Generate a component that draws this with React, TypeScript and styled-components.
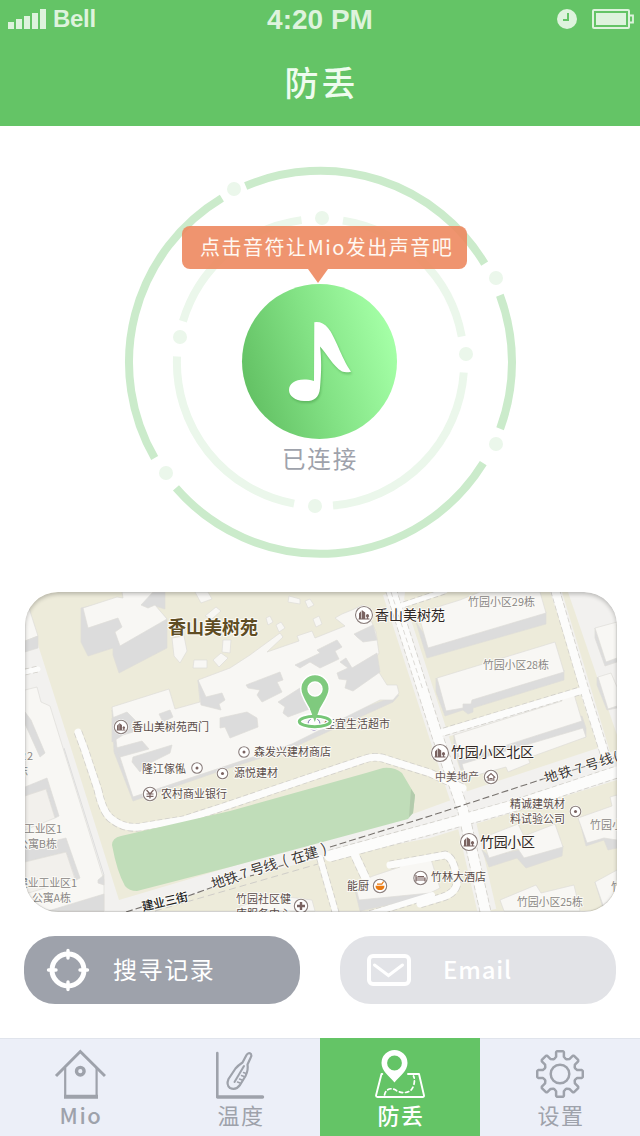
import React from "react";
import styled, { createGlobalStyle } from "styled-components";

const GREEN = "#64c466";
const SLATE = "#9ea2ab";
const cjk = `"Noto Sans CJK SC", "Noto Sans", sans-serif`;

const Global = createGlobalStyle`
  * { box-sizing: border-box; }
  body { margin: 0; background: #fff; font-family: ${cjk}; }
`;

const Screen = styled.div`
  width: 640px;
  height: 1136px;
  display: flex;
  flex-direction: column;
  background: #fff;
  overflow: hidden;
`;

const StatusBar = styled.div`
  height: 38px;
  display: grid;
  grid-template-columns: 1fr auto 1fr;
  align-items: center;
  padding: 0 6px 0 8px;
  color: #def3dd;
  font-family: "Liberation Sans", Arial, sans-serif;
  font-weight: bold;
`;
const Carrier = styled.div`
  display: flex;
  align-items: center;
  gap: 6px;
  font-size: 24px;
  letter-spacing: -0.3px;
`;
const Clock = styled.div`
  font-size: 28px;
  padding-top: 1px;
  margin-left: -2px;
`;
const StatusIcons = styled.div`
  display: flex;
  justify-content: flex-end;
  align-items: center;
  gap: 14px;
`;

const Header = styled.header`
  height: 126px;
  background: ${GREEN};
`;
const Title = styled.h1`
  margin: 0;
  height: 88px;
  padding: 0 0 0 3px;
  line-height: 88px;
  text-align: center;
  font-size: 34px;
  font-weight: 500;
  letter-spacing: 3px;
  color: #eefcee;
`;

const Radar = styled.section`
  position: relative;
  height: 466px;
`;
const RadarArt = styled.svg`
  display: block;
`;
const Bubble = styled.div`
  position: absolute;
  left: 182px;
  top: 100px;
  width: 285px;
  height: 43px;
  padding-left: 18px;
  border-radius: 8px;
  background: rgba(237, 136, 95, 0.9);
  color: #fff8f2;
  font-size: 20px;
  line-height: 41px;
  letter-spacing: 1.5px;
  white-space: nowrap;
  &::after {
    content: "";
    position: absolute;
    left: 126px;
    top: 43px;
    border: 10px solid transparent;
    border-top: 14px solid rgba(237, 136, 95, 0.9);
    border-bottom: 0;
  }
`;
const Connection = styled.div`
  position: absolute;
  left: 0;
  right: 0;
  top: 314px;
  line-height: 36px;
  text-align: center;
  font-size: 23.5px;
  letter-spacing: 1.8px;
  color: ${SLATE};
`;

const MapCard = styled.section`
  position: relative;
  width: 592px;
  height: 320px;
  margin-left: 25px;
  border-radius: 33px;
  overflow: hidden;
  &::after {
    content: "";
    position: absolute;
    inset: 0;
    border-radius: 33px;
    box-shadow: inset 0 2px 4px rgba(0, 0, 0, 0.24), inset 0 -1px 1px rgba(0, 0, 0, 0.12);
  }
`;
const MapArt = styled.svg`
  display: block;
  text {
    paint-order: stroke;
    stroke: #fbfaf6;
    stroke-width: 2px;
    stroke-linejoin: round;
    font-family: ${cjk};
  }
`;

const Actions = styled.div`
  display: flex;
  gap: 40px;
  padding: 24px 24px 34px;
`;
const Action = styled.button<{ $tone: string; $lead: number; $gap: number }>`
  width: 276px;
  height: 68px;
  border: 0;
  border-radius: 31px;
  background: ${(p) => p.$tone};
  display: flex;
  align-items: center;
  gap: ${(p) => p.$gap}px;
  padding: 0 0 0 ${(p) => p.$lead}px;
  color: #fff;
`;
const ActionLabel = styled.span<{ $size: number; $spacing: number; $weight: number }>`
  padding-bottom: 3px;
  font-family: ${cjk};
  font-size: ${(p) => p.$size}px;
  font-weight: ${(p) => p.$weight};
  letter-spacing: ${(p) => p.$spacing}px;
`;

const TabBar = styled.nav`
  display: grid;
  grid-template-columns: repeat(4, 160px);
  height: 98px;
`;
const Tab = styled.div<{ $active?: boolean }>`
  display: flex;
  flex-direction: column;
  align-items: center;
  background: ${(p) => (p.$active ? GREEN : "#eceff8")};
  border-top: 1px solid ${(p) => (p.$active ? GREEN : "#e0e4ec")};
  color: ${(p) => (p.$active ? "#fff" : SLATE)};
`;
const TabIcon = styled.svg`
  margin-top: 9px;
  flex: none;
`;
const TabLabel = styled.span<{ $strong?: boolean }>`
  font-size: 22px;
  line-height: 30px;
  margin-top: -1px;
  padding-left: 2px;
  letter-spacing: 1.6px;
  font-weight: ${(p) => (p.$strong ? 500 : 400)};
`;

const arc = (cx: number, cy: number, r: number, a: number, b: number) => {
  const p = (d: number) => {
    const t = (d * Math.PI) / 180;
    return `${(cx + r * Math.sin(t)).toFixed(2)} ${(cy - r * Math.cos(t)).toFixed(2)}`;
  };
  return `M${p(a)} A${r} ${r} 0 ${b - a > 180 ? 1 : 0} 1 ${p(b)}`;
};
const outerArcs = [[-23, 59], [69.5, 110.3], [121.8, 229], [240, 329]];
const innerArcs = [[9, 79.6], [94, 175], [190.6, 272.4], [286.7, 352.4]];
const dots = [[234, 189], [496, 278], [496, 444], [166, 473], [322, 218], [180, 337], [466, 354], [315, 506]];

const ROOF = "#f8f7f4";
const SIDE = "#dcdcdc";
const BEIGE = "#edebda";
const PAVE = "#f2f1ef";

const shapes: [string, string][] = [
  // parkland
  [BEIGE, "25,592 387,592 440,745 465,795 410,815 230,867 119,900 70,745 39,648"],
  [BEIGE, "405,592 550,592 583,688 437,732 402,615"],
  [BEIGE, "562,592 568,592 617,735 617,750 610,752"],
  [BEIGE, "444,738 581,695 598,748 465,792"],
  [BEIGE, "150,911 234,880 322,858 430,838 617,780 617,911"],
  // west side
  [ROOF, "25,608 29,608 38,636 25,641"],
  [SIDE, "25,641 38,636 38,648 25,652"],
  [ROOF, "25,690 37,687 41,702 50,706 104,880 104,911 25,911"],
  [SIDE, "25,712 31,720 45,753 40,757 25,724"],
  [SIDE, "25,787 47,778 59,816 55,818 46,789 25,796"],
  [SIDE, "25,848 66,838 80,878 76,880 66,852 25,862"],
  ["#f2f0ec", "25,796 46,789 55,818 25,830"],
  ["#f2f0ec", "25,862 66,852 75,879 25,894"],
  [SIDE, "98,880 104,875 104,885 98,883"],
  [SIDE, "48,911 104,894 104,911"],
  // tower in the north west
  [SIDE, "81,608 81,642 88,656 113,648 113,655 119,673 167,648 167,619 155,606 165,609 165,592 155,592"],
  [ROOF, "83,608 117,597 123,598 122,592 153,592 141,605 148,608 155,605 167,619 120,646 115,632 122,627 118,618 88,628"],
  // central complex
  [SIDE, "112,710 114,752 133,801 220,771 292,748 393,702 399,695 240,752 133,790"],
  [ROOF, "112,707 169,689 175,709 200,702 198,680 230,668 250,655 280,633 283,637 267,652 299,641 297,636 312,631 315,638 345,626 335,618 342,614 352,610 363,605 370,618 376,632 379,653 373,663 387,685 397,685 399,693 393,700 380,700 292,744 220,768 133,797 117,748"],
  [SIDE, "295,665 320,653 317,650 337,640 342,647 335,651 339,659 320,668 310,662 300,668"],
  [SIDE, "337,673 348,668 340,662 346,658 352,668 377,653 380,672 353,691 345,688 347,680 339,679"],
  [SIDE, "246,685 280,672 283,680 277,682 282,692 262,702 257,695 260,690 248,688"],
  [SIDE, "278,702 300,688 317,698 315,707 288,717 283,713 285,707"],
  [SIDE, "220,718 247,712 257,718 258,727 230,738 225,727 220,728"],
  [SIDE, "198,680 206,697 222,693 225,700 219,704 221,710 201,705"],
  [SIDE, "354,634 373,625 377,640 363,642 357,637"],
  [SIDE, "112,718 127,712 137,722 133,732 123,735 112,742"],
  [SIDE, "159,714 170,710 173,717 163,722"],
  [SIDE, "133,757 172,745 170,753 144,766 140,772 132,762"],
  [SIDE, "116,748 142,741 149,749 120,757"],
  // sheds between the towers
  [ROOF, "172,638 184,636 187,651 180,663 174,656"],
  [ROOF, "194,660 207,660 207,668 193,668"],
  [ROOF, "213,660 221,653 228,658 219,667"],
  [ROOF, "223,640 231,640 230,653 222,652"],
  [ROOF, "195,592 208,592 212,599 201,603"],
  [ROOF, "205,616 216,607 221,611 212,619"],
  [ROOF, "289,596 300,599 300,604 288,602"],
  [ROOF, "305,601 310,599 314,605 308,608"],
  [ROOF, "266,618 270,616 273,622 268,625"],
  [ROOF, "276,625 281,622 285,628 279,632"],
  [ROOF, "313,619 319,616 322,624 316,627"],
  // north east blocks
  [SIDE, "416,622 427,658 546,624 546,612 428,640"],
  [ROOF, "418,613 460,600 480,592 540,592 546,613 428,648"],
  [SIDE, "436,678 436,692 445,716 463,710 468,714 473,712 473,708 564,680 564,670 446,700"],
  [ROOF, "437,678 555,642 564,672 472,700 471,704 463,704 463,708 446,711"],
  [SIDE, "454,735 454,748 461,770 586,737 586,728 582,716 460,755"],
  [ROOF, "454,735 562,701 562,697 574,694 582,721 460,760"],
  [ROOF, "462,764 583,728 586,737 528,758 530,763 508,772 506,767 466,778"],
  [SIDE, "595,628 595,638 605,666 617,662 617,655 605,658"],
  [ROOF, "595,628 617,622 617,658 606,662"],
  [SIDE, "597,677 597,685 607,710 617,708 617,700"],
  [ROOF, "598,677 611,673 617,687 617,706 608,709"],
  // south east blocks
  [SIDE, "482,850 489,867 517,858 526,868 562,856 563,846 520,850 489,856"],
  [ROOF, "482,838 518,824 524,836 555,824 563,847 524,858 518,849 489,858"],
  [SIDE, "579,818 586,846 604,840 608,850 617,848 617,836 587,838"],
  [ROOF, "578,818 612,806 610,797 617,795 617,840 604,838 587,843"],
  [ROOF, "500,900 536,885 541,893 574,885 580,911 504,911"],
  [SIDE, "595,882 604,911 617,911 610,900"],
  [ROOF, "595,882 617,870 617,908 605,911"],
  [SIDE, "354,886 360,911 430,896 430,882 358,898"],
  [ROOF, "355,884 373,876 400,867 400,863 430,856 440,888 430,893 359,900"],
  [ROOF, "240,906 280,896 312,900 315,911 240,911"],
];

const roads: [string, number][] = [
  ["M78 732 L84 748 L98 790 Q103 814 113 820 Q125 829 140 827 L183 820 L220 808 L365 759 Q373 756 382 758 L430 773 L463 788", 7],
  ["M391 590 L437 735 L463 810 L486 914", 10],
  ["M437 734 L583 690", 7],
  ["M397 607 L445 591", 5],
  ["M555 590 L583 685 L606 758", 8],
  ["M330 856 L430 829 L520 804 L617 772", 11],
  ["M320 858 L336 914", 6],
  ["M353 851 L366 879", 8],
  ["M370 914 L432 895", 6],
  ["M390 865 L445 855 Q454 857 457 880 Q458 893 440 898 L420 904", 7],
  ["M25 672 L38 669", 5],
];

type L = [string, number, number, number, number, string, number?];
const labels: L[] = [
  ["香山美树苑", 168, 634, 18, 90, "#5f4d23", 700],
  ["香山美树苑", 375, 620, 14, 70, "#2f2725"],
  ["竹园小区29栋", 468, 606, 11, 67, "#8a8785"],
  ["竹园小区28栋", 483, 669, 11, 66, "#8a8785"],
  ["香山美树苑西门", 132, 731, 11, 77, "#5a4d4a"],
  ["佳宜生活超市", 324, 728, 11, 66, "#5a4d4a"],
  ["森发兴建材商店", 254, 756, 11, 77, "#5a4d4a"],
  ["隆江傢俬", 142, 773, 11, 44, "#5a4d4a"],
  ["源悦建材", 234, 777, 11, 44, "#5a4d4a"],
  ["农村商业银行", 161, 798, 11, 66, "#5a4d4a"],
  ["竹园小区北区", 451, 757, 14, 83, "#2f2725"],
  ["中美地产", 435, 781, 11, 44, "#6b5d5a"],
  ["精诚建筑材", 510, 808, 11, 55, "#5a4d4a"],
  ["料试验公司", 510, 823, 11, 55, "#5a4d4a"],
  ["竹园小区", 480, 847, 14, 55, "#2f2725"],
  ["竹林大酒店", 431, 881, 11, 55, "#5a4d4a"],
  ["竹园小区25栋", 517, 906, 11, 66, "#8a8785"],
  ["能厨", 347, 890, 11, 22, "#5a4d4a"],
  ["竹园社区健", 236, 903, 11, 55, "#5a4d4a"],
  ["康服务中心", 236, 918, 11, 55, "#5a4d4a"],
  ["工业区1", 24, 833, 11, 38, "#8a8785"],
  ["公寓B栋", 17, 848, 11, 40, "#8a8785"],
  ["建业工业区1", 17, 887, 11, 60, "#8a8785"],
  ["公寓A栋", 32, 902, 11, 39, "#8a8785"],
  ["22", 20, 760, 11, 13, "#8a8785"],
  ["栋", 17, 775, 11, 11, "#8a8785"],
  ["竹园小", 590, 829, 11, 33, "#8a8785"],
  ["竹", 611, 891, 11, 11, "#8a8785"],
];

// glyphs spaced along the metro line: character, x, y, size
const lineGlyphs: [string, number, number, number][] = [
  ["地", 213, 889, 14], ["铁", 226, 885, 14], ["7", 242, 879, 13], ["号", 252, 876, 14], ["线", 265, 872, 14],
  ["(", 284, 866, 14], ["在", 293, 864, 14], ["建", 306, 860, 14], [")", 323, 854, 14],
  ["地", 546, 783, 13.5], ["铁", 560, 779, 13.5], ["7", 577, 774, 13], ["号", 587, 771, 13.5], ["线", 601, 766, 13.5], ["(", 615, 762, 13],
];

function Badge({ x, y, r, children }: { x: number; y: number; r: number; children?: React.ReactNode }) {
  return (
    <g transform={`translate(${x} ${y})`}>
      <circle r={r + 1} fill="#fff" />
      <circle r={r} fill="#fff" stroke="#8b7f7c" strokeWidth={1.1} />
      {children}
    </g>
  );
}
const Towers = ({ s = 1 }: { s?: number }) => (
  <g fill="#7a6361" transform={`scale(${s})`}>
    <path d="M-5 3.600V-1.500l2.200-2.500v7.600zM-2.200 3.600V-5l3.400 2.400V3.600zM2.800 3.600V2.300a1.600 1.600 0 1 1 1.400 0V3.600zM-5.500 3.400h11v1h-11z" />
  </g>
);

function AreaMap() {
  return (
    <MapArt width="592" height="320" viewBox="25 592 592 320">
      <rect x="25" y="592" width="592" height="320" fill={PAVE} />
      {shapes.slice(0, 5).map(([f, p], i) => <polygon key={i} points={p} fill={f} />)}
      <path d="M392 592L440 740L464 812L487 911" stroke={PAVE} strokeWidth="19" fill="none" />
      <path d="M64 748L104 875" stroke="#ddd" fill="none" />
      <g fill="none">
        {roads.map(([d, w], i) => <path key={i} d={d} stroke="#d2d0ca" strokeWidth={w + 1.6} strokeDasharray="5 2.5" />)}
      </g>
      <g stroke="#dedcd8" strokeWidth="0.7">
        {shapes.slice(5).map(([f, p], i) => <polygon key={i} points={p} fill={f} />)}
      </g>
      <g fill="none" stroke="#fcfcfb">
        {roads.map(([d, w], i) => <path key={i} d={d} strokeWidth={w} strokeLinecap="round" />)}
      </g>
      <path d="M112 845Q112 838 121 836L230 811L366 773L383 768Q395 767 402 773L415 795L413 813L408 819L230 867L137 891Q129 891 125 886Q117 872 112 845Z" fill="#c0ddb9" />
      <path d="M411 789L415 795L413 813L409 817Z" fill="#b3cbac" />
      <path d="M391 592L423 690" stroke="#dcdad6" strokeDasharray="5 3" fill="none" />
      <path d="M126 912L145 906M188 896L213 887M238 880L242 878M250 876L254 875M277 867L284 865M330 847L430 816L543 779" stroke="#77726e" strokeWidth="1.1" strokeDasharray="7 3" fill="none" />
      <path d="M543 779L617 757" stroke="#888" fill="none" />
      <path d="M155 911L228 890L318 864" stroke="#cfcdc8" strokeDasharray="7 4" fill="none" />
      {labels.map(([t, x, y, s, w, c, b], i) => (
        <text key={i} x={x} y={y} fontSize={s} textLength={w} fill={c} fontWeight={b ?? 400}>{t}</text>
      ))}
      <text x="143" y="911" fontSize="12" textLength="47" fontWeight="500" fill="#222" transform="rotate(-13 143 911)">建业三街</text>
      {lineGlyphs.map(([t, x, y, s], i) => (
        <text key={i} x={x} y={y} fontSize={s} fill="#3c3836" transform={`rotate(-17 ${x} ${y})`}>{t}</text>
      ))}
      <Badge x={364} y={615} r={8.5}><Towers /></Badge>
      <Badge x={440} y={753} r={8.5}><Towers /></Badge>
      <Badge x={469} y={842} r={8.5}><Towers /></Badge>
      <Badge x={121} y={727} r={6.7}><Towers s={0.8} /></Badge>
      {[[244, 752], [197, 768], [222.5, 773.5], [575.5, 811.5]].map(([x, y]) => (
        <Badge key={x} x={x} y={y} r={5.3}><circle r="1.5" fill="#7a6361" /></Badge>
      ))}
      <Badge x={150} y={794} r={6.7}>
        <path d="M-3.5 -4L0 0L3.5 -4M0 0V4.5M-3.5 0H3.5M-3.5 2.3H3.5" stroke="#7a6361" strokeWidth="1.2" fill="none" />
      </Badge>
      <Badge x={491} y={777} r={6.7}>
        <path d="M-4.3 .6L0 -3.400L4.300 .6M-2.800 -.3V4M2.800 -.3V4M-1 4V1.500H1V4" stroke="#7a6361" strokeWidth="1.1" fill="none" />
      </Badge>
      <Badge x={420.5} y={878} r={6.7}>
        <path d="M-4.5 -3V3.5M-4.5 2H4.5M4.5 3.5V0H-4.5M-3 -1.5H3.5" stroke="#7a6361" strokeWidth="1.2" fill="none" />
      </Badge>
      <Badge x={301} y={906} r={6.7}>
        <path d="M-4 0H4M0 -4V4" stroke="#7a6361" strokeWidth="2.4" fill="none" />
      </Badge>
      <Badge x={380} y={886} r={6.7}>
        <path d="M-4.5 -.3h9c0 2.600-1.500 3.700-3 4.200h-3c-1.500-.5-3-1.600-3-4.200z" fill="#ea7a10" />
        <path d="M-3 -1.800H1.800L3.600 -4.500" stroke="#ea7a10" strokeWidth="1.2" fill="none" />
      </Badge>
      <circle cx="314" cy="724" r="6" fill="#fff" stroke="#7c6fb5" />
      <ellipse cx="314.800" cy="721.500" rx="15.500" ry="5.500" fill="none" stroke="#fff" strokeWidth="6" />
      <path d="M315 674.500A14.300 14.300 0 0 0 300.700 688.800C300.700 699 311 707 314.800 722C318.500 707 329.300 699 329.300 688.800A14.300 14.300 0 0 0 315 674.500ZM315 682A7 7 0 1 1 315 696A7 7 0 1 1 315 682Z" fillRule="evenodd" fill="#7fca7e" stroke="#fff" strokeWidth="1.500" />
      <ellipse cx="314.800" cy="721.500" rx="15.500" ry="5.200" fill="none" stroke="#76c676" strokeWidth="3" />
      <path d="M310 709L314.800 722L319.500 709Z" fill="#7fca7e" />
    </MapArt>
  );
}

const gearPath = (() => {
  const pts: string[] = [];
  for (let i = 0; i < 8; i++) {
    const t = (i * Math.PI) / 4;
    [[-5.6, -15.2], [-3.9, -17.2], [-3.9, -21.8], [-2.9, -22.8], [2.9, -22.8], [3.9, -21.8], [3.9, -17.2], [5.6, -15.2]].forEach(([x, y]) => {
      pts.push(`${(24 + x * Math.cos(t) - y * Math.sin(t)).toFixed(2)} ${(25 + x * Math.sin(t) + y * Math.cos(t)).toFixed(2)}`);
    });
  }
  return `M${pts.join("L")}Z`;
})();

export default function App() {
  return (
    <Screen>
      <Global />
      <Header>
        <StatusBar>
          <Carrier>
            <svg width="39" height="20" fill="currentColor">
              <path d="M0 13h6v7H0zM8 10h6v10H8zM16 7h6v13h-6zM24 4h6v16h-6zM32 0h6v20h-6z" />
            </svg>
            Bell
          </Carrier>
          <Clock>4:20 PM</Clock>
          <StatusIcons>
            <svg width="21" height="20">
              <circle cx="10" cy="10" r="10" fill="#def3dd" />
              <path d="M11 4V11H6" stroke={GREEN} strokeWidth="2" fill="none" />
            </svg>
            <svg width="42" height="20">
              <rect x="1" y="1" width="36" height="18" rx="1" fill="none" stroke="#def3dd" strokeWidth="2" />
              <rect x="4" y="4" width="30" height="12" fill="#def3dd" />
              <path d="M38 6.500h3v7h-3" stroke="#def3dd" strokeWidth="1.800" fill="none" />
            </svg>
          </StatusIcons>
        </StatusBar>
        <Title>防丢</Title>
      </Header>

      <Radar>
        <RadarArt width="640" height="466" viewBox="0 126 640 466">
          <defs>
            <linearGradient id="disc" x1="0.030" y1="0.650" x2="0.970" y2="0.350">
              <stop offset="0" stopColor="#64c265" />
              <stop offset="0.500" stopColor="#84e386" />
              <stop offset="1" stopColor="#a4ffa6" />
            </linearGradient>
          </defs>
          <g fill="none" strokeWidth="8">
            {outerArcs.map(([a, b]) => <path key={a} d={arc(320.5, 362.3, 191.5, a, b)} stroke="#cbebcb" />)}
            {innerArcs.map(([a, b]) => <path key={a} d={arc(320.5, 362.5, 143.6, a, b)} stroke="#ebf7eb" />)}
          </g>
          {dots.map(([x, y]) => <circle key={`${x}-${y}`} cx={x} cy={y} r="7" fill="#ebf7eb" />)}
          <circle cx="319.500" cy="361.500" r="77.500" fill="url(#disc)" />
          <path
            d="M314.300 322.300Q322 321 328 328C335 336 341 357 351 371.700Q346 373 342 371.500C333 366 327 354 320 346.500C322 362 321 376 320 388C319 399 313 401.500 304 401C295 400.500 289 396 289 390C289 382 299 377 314 381Z"
            fill="#fff"
            style={{ filter: "drop-shadow(1px 2px 1px rgba(50,130,50,.35))" }}
          />
        </RadarArt>
        <Bubble>点击音符让Mio发出声音吧</Bubble>
        <Connection>已连接</Connection>
      </Radar>

      <MapCard>
        <AreaMap />
      </MapCard>

      <Actions>
        <Action $tone={SLATE} $lead={22} $gap={23}>
          <svg width="44" height="44" fill="none" stroke="#fff" strokeLinecap="round">
            <circle cx="22" cy="22" r="16" strokeWidth="5" />
            <path d="M22 2.500V10M22 34V41.500M2.500 22H10M34 22H41.500" strokeWidth="3.400" />
          </svg>
          <ActionLabel $size={24} $spacing={1.6} $weight={400}>搜寻记录</ActionLabel>
        </Action>
        <Action $tone="#e2e3e7" $lead={27} $gap={32}>
          <svg width="44" height="32" fill="none" stroke="#fff">
            <rect x="2" y="2" width="40" height="28" rx="4" strokeWidth="4" />
            <path d="M7.500 11L21.500 21.500L35.500 11" strokeWidth="3" strokeLinecap="round" />
          </svg>
          <ActionLabel $size={24} $spacing={0.8} $weight={500}>Email</ActionLabel>
        </Action>
      </Actions>

      <TabBar>
        <Tab>
          <TabIcon width="52" height="52" viewBox="54 1048 52 52" fill="none" stroke="currentColor">
            <path d="M56 1076L80.300 1051.500L105 1076" strokeWidth="3" />
            <path d="M65.200 1068V1097M96.600 1068V1097" strokeWidth="2.200" />
            <path d="M64 1096.800H98" strokeWidth="4" />
            <circle cx="80.300" cy="1071.200" r="3.800" strokeWidth="3.400" />
          </TabIcon>
          <TabLabel $strong>Mio</TabLabel>
        </Tab>
        <Tab>
          <TabIcon width="52" height="52" viewBox="214 1048 52 52" fill="none" stroke="currentColor" strokeLinecap="round" strokeLinejoin="round">
            <path d="M217.300 1053V1097" strokeWidth="2.600" />
            <path d="M217.800 1097H262.500" strokeWidth="3.400" />
            <path d="M246.500 1055Q248.500 1052 251 1054Q252 1055.500 250.500 1058L247.500 1064.500Q248.500 1070 245.500 1076L240 1085Q236 1090.500 230 1088Q226 1085 228.500 1079L235.500 1068.500Q238 1065.500 242.500 1062.500Z" strokeWidth="2.200" />
            <path d="M244 1066L234.500 1082" strokeWidth="2" />
            <path d="M246 1073.500L243.500 1072.500M244 1076.500L241.500 1075.500M242 1080L239.500 1079M240 1083L237.500 1082" strokeWidth="1.500" />
          </TabIcon>
          <TabLabel>温度</TabLabel>
        </Tab>
        <Tab $active>
          <TabIcon width="52" height="52" viewBox="374 1048 52 52" fill="none" stroke="currentColor" strokeLinecap="round" strokeLinejoin="round">
            <path d="M382.300 1074H381.500L376 1095.500Q376 1097 377.500 1097H422.500Q424.300 1097 424 1095.500L419 1074H408" strokeWidth="1.900" />
            <path d="M384.500 1095C386 1087.500 393 1087.500 397 1091C404 1094 411 1093 413.500 1086C415 1081 414.500 1078 413.500 1076" strokeWidth="1.700" strokeDasharray="3.500 2.700" />
            <path d="M394.500 1050A13 13 0 0 0 381.500 1063C381.500 1071 389 1076 394.500 1082.500C400 1076 407.500 1071 407.500 1063A13 13 0 0 0 394.500 1050ZM394.500 1055.600A7.400 7.400 0 1 1 394.500 1070.400A7.400 7.400 0 1 1 394.500 1055.600Z" fill="currentColor" fillRule="evenodd" stroke="none" />
          </TabIcon>
          <TabLabel $strong>防丢</TabLabel>
        </Tab>
        <Tab>
          <TabIcon width="48" height="52" viewBox="0 -1 48 52" fill="none" stroke="currentColor" strokeWidth="2.500" strokeLinejoin="round">
            <path d={gearPath} />
            <circle cx="24" cy="25" r="9.300" />
          </TabIcon>
          <TabLabel>设置</TabLabel>
        </Tab>
      </TabBar>
    </Screen>
  );
}
